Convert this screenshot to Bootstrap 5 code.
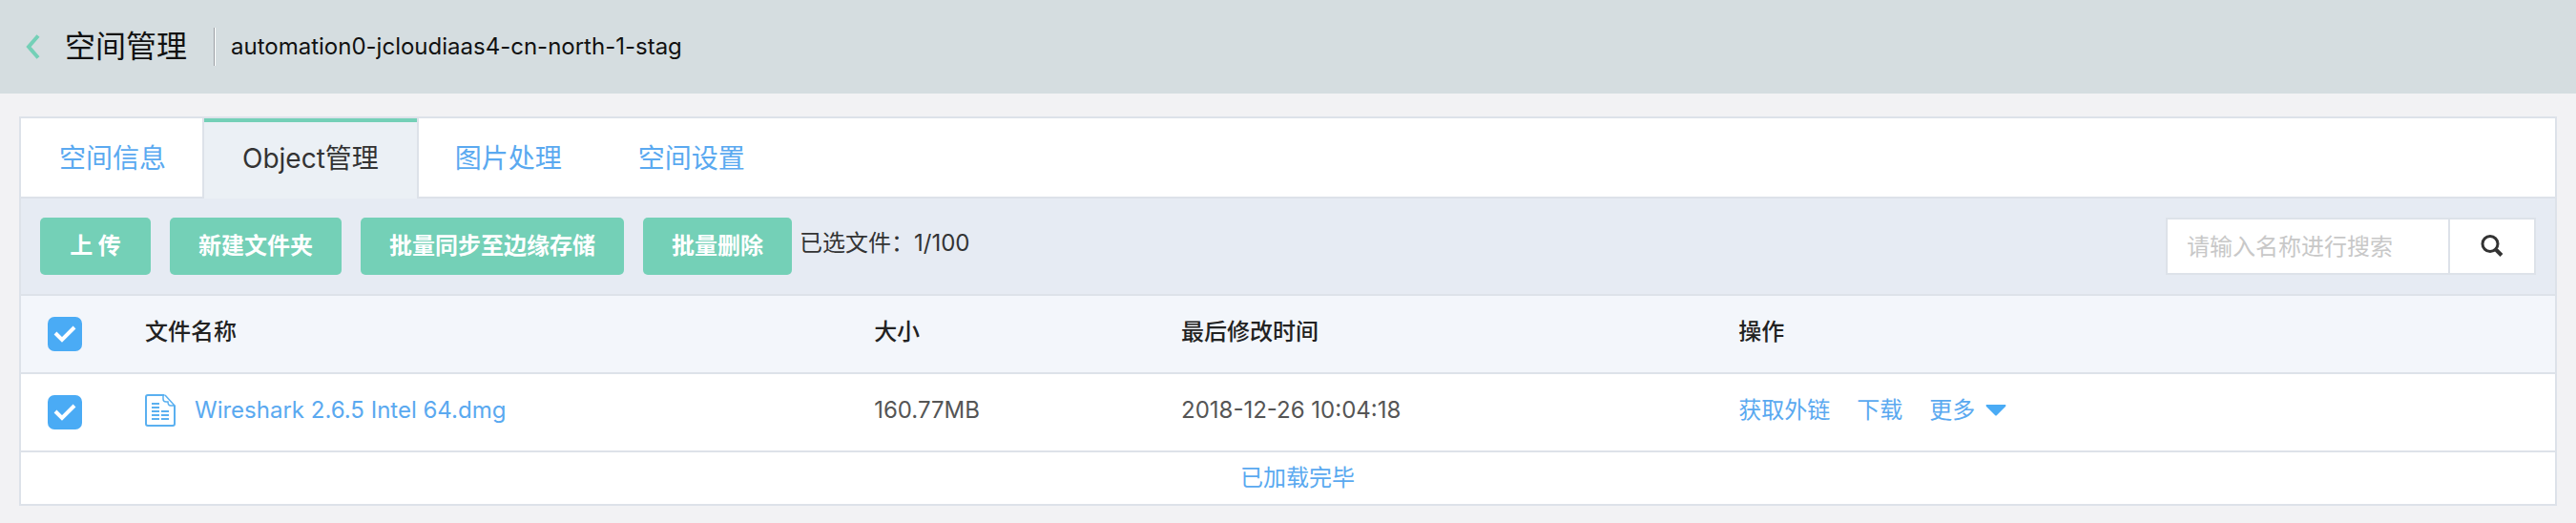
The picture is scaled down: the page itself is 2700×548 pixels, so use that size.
<!DOCTYPE html>
<html lang="zh-CN">
<head>
<meta charset="utf-8">
<meta name="viewport" content="width=device-width, initial-scale=1">
<title>空间管理</title>
<link href="https://cdn.jsdelivr.net/npm/bootstrap@5.3.0/dist/css/bootstrap.min.css" rel="stylesheet">
<style>
  :root { --line: #dde2e9; --mint: #74d0b7; --sky: #4aabf5; --link: #5aa9f0; }
  body { background: #f2f2f4; color: #333; font: 24px/36px Inter, "Noto Sans CJK SC", sans-serif; }
  a { color: var(--link); text-decoration: none; }
  .page-head { background: #d5dde0; height: 98px; padding: 0 26px; }
  .back-link { width: 16px; margin-right: 26px; line-height: 0; }
  .page-title { font-size: 32px; line-height: 48px; font-weight: 400; color: #111; }
  .head-rule { width: 2px; height: 40px; margin: 0 16px 0 28px; background: linear-gradient(90deg, #9a9ea3 50%, #fff 50%); }
  .bucket-name { color: #111; }
  .panel { margin: 24px 20px 8px; border: 2px solid var(--line); background: #fff; }
  .panel .nav-tabs { border-bottom: 2px solid var(--line); }
  .panel .nav-link { border: 0; border-radius: 0; margin: 0 0 -2px; padding: 22px 40px; font-size: 28px; line-height: 40px; color: var(--link); }
  .panel .nav-link.active { margin: 0 -2px -2px; border: 2px solid var(--line); border-width: 0 2px; background: #ebf0f5; color: #333; box-shadow: inset 0 4px var(--mint); }
  .toolbar { background: #e6ebf3; border-bottom: 2px solid var(--line); padding: 20px; }
  .btn-mint { min-width: 116px; height: 60px; padding: 0 30px; border: 0; border-radius: 5px; background: var(--mint); color: #fff; font-size: 24px; font-weight: 700; line-height: 60px; margin-right: 20px; }
  .btn-mint:last-of-type { margin-right: 8px; }
  .btn-mint:hover { background: #62c3a8; color: #fff; }
  .picked { padding-bottom: 6px; }
  .search-box { width: 388px; }
  .search-box .form-control, .search-box .btn { height: 60px; border: 2px solid var(--line); border-radius: 0; background: #fff; font-size: 24px; padding: 0 20px; }
  .search-box .form-control::placeholder { color: #c8c8c8; opacity: 1; }
  .search-box .btn { width: 92px; margin-left: -2px !important; line-height: 0; color: #333; }
  .files { table-layout: fixed; border-collapse: separate; border-spacing: 0; margin: 0; }
  .files th, .files td { height: 82px; padding: 0; border-bottom: 2px solid var(--line) !important; vertical-align: middle; color: #555; }
  .files th { font-weight: 500; color: #222; background: #f3f6fb; }
  .files th + th, .files td + td { padding-bottom: 4px; }
  .files .pick { padding-left: 28px; }
  .files .form-check-input { display: block; width: 36px; height: 36px; margin: 0; border: 0; border-radius: 7px; }
  .files .form-check-input:checked { background: var(--sky) url("data:image/svg+xml,%3Csvg xmlns='http://www.w3.org/2000/svg' viewBox='0 0 36 36'%3E%3Cpath d='M8 17l7 7L28 11' fill='none' stroke='%23fff' stroke-width='4'/%3E%3C/svg%3E") center/36px no-repeat; }
  .col-pick { width: 130px; } .col-name { width: 28.770%; } .col-size { width: 12.120%; } .col-time { width: 22%; }
  .name-gap { gap: 20px; } .op-gap { gap: 28px; }
  .more-link { border: 0; background: none; padding: 0; color: var(--link); gap: 10px; }
  .loaded { height: 54px; padding-left: 20px; color: var(--link); }
</style>
</head>
<body>
<header class="page-head d-flex align-items-center">
  <a class="back-link" href="#" aria-label="返回"><svg width="16" height="26" viewBox="0 0 16 26"><path d="M14 1.500L4 13l10 11.500" fill="none" stroke="#74d0b7" stroke-width="4"/></svg></a>
  <h1 class="page-title m-0">空间管理</h1>
  <span class="head-rule"></span>
  <span class="bucket-name">automation0-jcloudiaas4-cn-north-1-stag</span>
</header>
<main class="panel">
  <nav class="nav nav-tabs">
    <a class="nav-link" href="#">空间信息</a>
    <a class="nav-link active" href="#" aria-current="page">Object管理</a>
    <a class="nav-link" href="#">图片处理</a>
    <a class="nav-link" href="#">空间设置</a>
  </nav>
  <div class="toolbar d-flex align-items-center">
    <button class="btn btn-mint" type="button">上 传</button>
    <button class="btn btn-mint" type="button">新建文件夹</button>
    <button class="btn btn-mint" type="button">批量同步至边缘存储</button>
    <button class="btn btn-mint" type="button">批量删除</button>
    <span class="picked">已选文件：1/100</span>
    <form class="search-box input-group flex-nowrap ms-auto">
      <input class="form-control" type="text" placeholder="请输入名称进行搜索" aria-label="请输入名称进行搜索">
      <button class="btn" type="button" aria-label="搜索"><svg width="24" height="24" viewBox="0 0 24 24" fill="none" stroke="#333"><circle cx="10" cy="9.500" r="8" stroke-width="3"/><path d="M15.500 15l6.500 6.500" stroke-width="4"/></svg></button>
    </form>
  </div>
  <table class="table files">
    <colgroup><col class="col-pick"><col class="col-name"><col class="col-size"><col class="col-time"><col></colgroup>
    <thead>
      <tr><th class="pick"><input class="form-check-input" type="checkbox" checked aria-label="全选"></th><th>文件名称</th><th>大小</th><th>最后修改时间</th><th>操作</th></tr>
    </thead>
    <tbody>
      <tr>
        <td class="pick"><input class="form-check-input" type="checkbox" checked aria-label="选择 Wireshark 2.6.5 Intel 64.dmg"></td>
        <td><a class="d-flex align-items-center name-gap" href="#"><svg width="32" height="34" viewBox="0 0 32 34" fill="none" stroke="#5ab0f0" stroke-width="2"><path d="M20.500 1H3Q1 1 1 3v28q0 2 2 2h26q2 0 2-2V11.500"/><path d="M19 1v4q0 3 3 3h2q0 4 3 4h4M21 1l10 11" stroke-width="1.500"/><path d="M7 10h8M7 14h8M7 18h8M7 22h8M7 26h8M17 18h8M17 22h8M17 26h8"/></svg>Wireshark 2.6.5 Intel 64.dmg</a></td>
        <td>160.77MB</td>
        <td>2018-12-26 10:04:18</td>
        <td><div class="d-flex align-items-center op-gap"><a href="#">获取外链</a><a href="#">下载</a><button class="more-link d-flex align-items-center" type="button">更多<svg width="24" height="14" viewBox="0 0 24 14"><path d="M2 1h20q1 1 0 2l-9 9q-1 1-2 0L2 3q-1-1 0-2z" fill="#4aabf5"/></svg></button></div></td>
      </tr>
    </tbody>
  </table>
  <div class="loaded d-flex align-items-center justify-content-center">已加载完毕</div>
</main>
<script src="https://cdn.jsdelivr.net/npm/bootstrap@5.3.0/dist/js/bootstrap.bundle.min.js"></script>
</body>
</html>
